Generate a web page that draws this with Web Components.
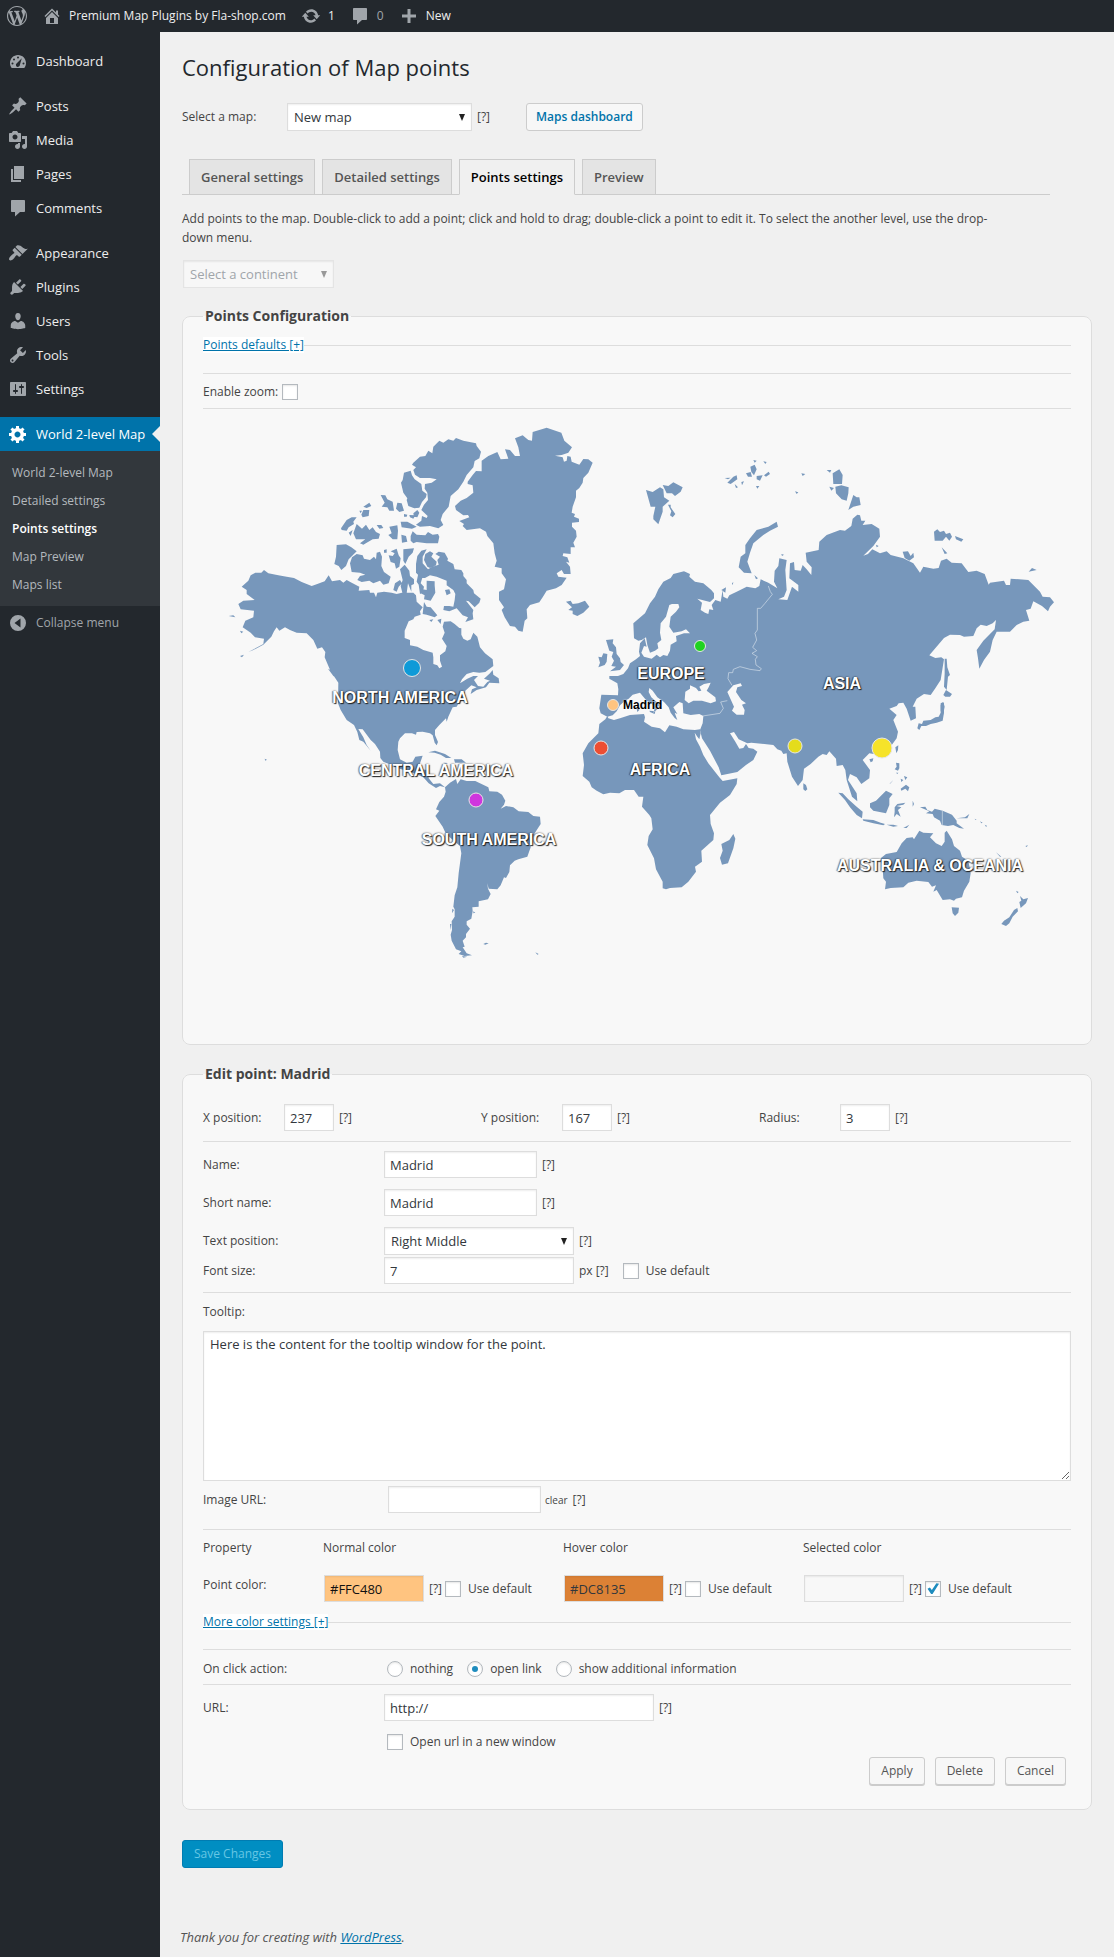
<!DOCTYPE html>
<html lang="en">
<head>
<meta charset="utf-8">
<title>Configuration of Map points</title>
<style>
html,body{margin:0;padding:0}
body{background:#f0f0f0;color:#444;font:12px/20px "Open Sans","Noto Sans",sans-serif}
</style>
</head>
<body>
<admin-shell>
  <admin-toolbar slot="toolbar"></admin-toolbar>
  <admin-menu slot="menu"></admin-menu>
  <page-head></page-head>
  <option-panel heading="Points Configuration"><map-settings></map-settings></option-panel>
  <option-panel heading="Edit point: Madrid"><point-editor></point-editor></option-panel>
  <page-foot></page-foot>
</admin-shell>
<script>
const ICONS = {
  wordpress:'M20 10c0-5.51-4.49-10-10-10C4.48 0 0 4.49 0 10c0 5.52 4.48 10 10 10 5.51 0 10-4.48 10-10zM7.78 15.37L4.37 6.22c.55-.02 1.17-.08 1.17-.08.5-.06.44-1.13-.06-1.11 0 0-1.45.11-2.37.11-.18 0-.37 0-.58-.01C4.12 2.69 6.87 1.11 10 1.11c2.33 0 4.45.87 6.05 2.34-.68-.11-1.65.39-1.65 1.58 0 .74.45 1.36.9 2.1.35.61.55 1.36.55 2.46 0 1.49-1.4 5-1.4 5l-3.03-8.37c.54-.02.82-.17.82-.17.5-.05.44-1.25-.06-1.22 0 0-1.44.12-2.38.12-.87 0-2.33-.12-2.33-.12-.5-.03-.56 1.2-.06 1.22l.92.08 1.26 3.41zM17.41 10c.24-.64.74-1.87.43-4.25.7 1.29 1.05 2.71 1.05 4.25 0 3.29-1.73 6.24-4.4 7.78.97-2.59 1.94-5.2 2.92-7.78zM6.1 18.09C3.12 16.65 1.11 13.53 1.11 10c0-1.3.23-2.48.72-3.59C3.25 10.3 4.67 14.2 6.1 18.09zm4.03-6.63l2.58 6.98c-.86.29-1.76.45-2.71.45-.79 0-1.57-.11-2.29-.33.81-2.38 1.62-4.74 2.42-7.1z',
  home:'M16 8.5l1.53 1.53-1.06 1.06L10 4.6l-6.47 6.49-1.06-1.06L10 2.5l4 4v-2h2v4zm-6-2.46l6 5.99V18H4v-5.97zM12 17v-5H8v5h4z',
  update:'M10.2 3.28c3.53 0 6.43 2.61 6.92 6h2.08l-3.5 4-3.5-4h2.32c-.45-1.97-2.21-3.45-4.32-3.45-1.45 0-2.73.71-3.54 1.78L4.95 5.66C6.23 4.2 8.11 3.28 10.2 3.28zm-.4 13.44c-3.52 0-6.43-2.61-6.92-6H.8l3.5-4c1.17 1.33 2.33 2.67 3.5 4H5.48c.45 1.97 2.21 3.45 4.32 3.45 1.45 0 2.73-.71 3.54-1.78l1.71 1.95c-1.28 1.46-3.15 2.38-5.25 2.38z',
  comment:'M4 2h12c.55 0 1 .45 1 1v10c0 .55-.45 1-1 1h-4l-5 4.500v-4.500H4c-.55 0-1-.45-1-1V3c0-.55.45-1 1-1z',
  plus:'M17 8.500v3h-5.500v5.500h-3v-5.500H3v-3h5.500V3h3v5.500H17z',
  dashboard:'M3.76 17h12.48c1.09-1.4 1.76-3.1 1.76-5 0-4.42-3.58-8-8-8s-8 3.58-8 8c0 1.9.67 3.6 1.76 5zM10 5.500a1 1 0 1 1 0 2 1 1 0 0 1 0-2zM6 7.500a1 1 0 1 1 0 2 1 1 0 0 1 0-2zM4.500 11.500a1 1 0 1 1 0 2 1 1 0 0 1 0-2zM15.500 11.500a1 1 0 1 1 0 2 1 1 0 0 1 0-2zM13.800 7.300L11.900 13.700A2 2 0 1 1 8.800 12.200z',
  pin:'M10.44 3.02l1.82-1.82 6.36 6.35-1.83 1.82c-1.05-.68-2.48-.57-3.41.36l-.75.75c-.92.93-1.04 2.35-.35 3.41l-1.83 1.82-2.41-2.41-2.8 2.79c-.42.42-3.38 2.71-3.8 2.29s1.86-3.39 2.28-3.81l2.79-2.79L4.1 9.36l1.83-1.82c1.05.69 2.48.57 3.4-.36l.75-.75c.93-.92 1.05-2.35.36-3.41z',
  media:'M13 11V4c0-.55-.45-1-1-1h-1.67L9 1H5L3.67 3H2c-.55 0-1 .45-1 1v7c0 .55.45 1 1 1h10c.55 0 1-.45 1-1zM7 4.5c1.38 0 2.5 1.12 2.5 2.5S8.38 9.5 7 9.5 4.5 8.38 4.5 7 5.62 4.5 7 4.5zM14 6h5v10.5c0 1.38-1.12 2.5-2.5 2.5S14 17.88 14 16.5s1.12-2.5 2.5-2.5c.17 0 .34.02.5.05V9h-3V6zm-4 8.05V13h2v3.5c0 1.38-1.12 2.5-2.5 2.5S7 17.88 7 16.5 8.12 14 9.5 14c.17 0 .34.02.5.05z',
  page:'M6 15V2h10v13H6zm-1 1h8v2H3V5h2v11z',
  brush:'M14.48 11.06L7.41 3.99l1.5-1.5c.5-.56 2.3-.47 3.51.32 1.21.8 1.43 1.28 2.91 2.1 1.18.64 2.45 1.26 4.45.85zm-.71.71L6.7 4.7 4.93 6.47c-.39.39-.39 1.02 0 1.41l1.06 1.06c.39.39.39 1.03 0 1.42-.6.6-1.43 1.11-2.21 1.69-.35.26-.7.53-1.01.84C1.43 14.23.4 16.08 1.4 17.07c.99 1 2.84-.03 4.18-1.36.31-.31.58-.66.85-1.02.57-.78 1.08-1.61 1.69-2.21.39-.39 1.02-.39 1.41 0l1.06 1.06c.39.39 1.02.39 1.41 0z',
  plug:'M13.11 4.36L9.87 7.6 8 5.73l3.24-3.24c.35-.34 1.05-.2 1.56.32.52.51.66 1.21.31 1.55zm-8 1.77l.91-1.12 9.01 9.01-1.19.84c-.71.71-2.63 1.16-3.82 1.16H6.14L4.9 17.26c-.59.59-1.54.59-2.12 0-.59-.58-.59-1.53 0-2.12l1.24-1.24v-3.88c0-1.13.4-3.19 1.09-3.89zm7.26 3.97l3.24-3.24c.34-.35 1.04-.21 1.55.31.52.51.66 1.21.31 1.55l-3.24 3.25z',
  user:'M10 9.25c-2.27 0-2.73-3.44-2.73-3.44C7 4.02 7.82 2 9.97 2c2.16 0 2.98 2.02 2.71 3.81 0 0-.41 3.44-2.68 3.44zm0 2.57L12.72 10c2.39 0 4.52 2.33 4.52 4.53v2.49s-3.65 1.13-7.24 1.13c-3.65 0-7.24-1.13-7.24-1.13v-2.49c0-2.25 1.94-4.48 4.47-4.48z',
  wrench:'M16.68 9.77c-1.34 1.34-3.3 1.67-4.95.99l-5.41 6.52c-.99.99-2.59.99-3.58 0s-.99-2.59 0-3.57l6.52-5.42c-.68-1.65-.35-3.61.99-4.95 1.28-1.28 3.12-1.62 4.72-1.06l-2.89 2.89 2.82 2.82 2.86-2.87c.53 1.58.18 3.39-1.08 4.65zM3.81 16.21c.4.39 1.04.39 1.43 0 .4-.4.4-1.04 0-1.43-.39-.4-1.03-.4-1.43 0-.39.39-.39 1.03 0 1.43z',
  sliders:'M18 16V4c0-.55-.45-1-1-1H3c-.55 0-1 .45-1 1v12c0 .55.45 1 1 1h14c.55 0 1-.45 1-1zM8 11h1c.55 0 1 .45 1 1s-.45 1-1 1H8v1.5c0 .28-.22.5-.5.5s-.5-.22-.5-.5V13H6c-.55 0-1-.45-1-1s.45-1 1-1h1V5.5c0-.28.22-.5.5-.5s.5.22.5.5V11zm5-2h-1c-.55 0-1-.45-1-1s.45-1 1-1h1V5.5c0-.28.22-.5.5-.5s.5.22.5.5V7h1c.55 0 1 .45 1 1s-.45 1-1 1h-1v5.5c0 .28-.22.5-.5.5s-.5-.22-.5-.5V9z',
  gear:'M18 12h-2.18c-.17.7-.44 1.35-.81 1.93l1.54 1.54-2.1 2.1-1.54-1.54c-.58.36-1.23.63-1.91.79V19H8v-2.18c-.68-.16-1.33-.43-1.91-.79l-1.54 1.54-2.12-2.12 1.54-1.54c-.36-.58-.63-1.23-.79-1.91H1V9.03h2.17c.16-.7.44-1.35.8-1.94L2.43 5.55l2.1-2.1 1.54 1.54c.58-.37 1.24-.64 1.93-.81V2h3v2.18c.68.16 1.33.43 1.91.79l1.54-1.54 2.12 2.12-1.54 1.54c.36.59.64 1.24.8 1.94H18V12zm-8.5 1.5c1.66 0 3-1.34 3-3s-1.34-3-3-3-3 1.34-3 3 1.34 3 3 3z',
  collapse:'M10 2a8 8 0 1 1 0 16 8 8 0 0 1 0-16zM12.500 5.500L6.500 10l6 4.500z'
};

const define = (name, html, setup) => customElements.define(name, class extends HTMLElement {
  constructor(){
    super();
    this.attachShadow({mode:'open'});
  }
  connectedCallback(){
    const t = document.createElement('template');
    t.innerHTML = typeof html === 'function' ? html(this) : html;
    this.shadowRoot.replaceChildren(t.content.cloneNode(true));
    if (setup) setup(this);
  }
});

define('dash-icon', el => `<style>:host{display:block;width:20px;height:20px;flex:none}svg{display:block;width:100%;height:100%;fill:currentColor}</style>
<svg viewBox="0 0 20 20" aria-hidden="true"><path fill-rule="evenodd" d="${ICONS[el.getAttribute('name')]}"/></svg>`);

define('help-tip', `<style>:host{display:inline-block;font-size:12px;line-height:20px;margin-left:5px;cursor:help;white-space:nowrap}</style><span>[?]</span>`);

const CONTROLS = `
*{box-sizing:border-box}
a{color:#0073aa}
input,select,textarea,button{font-family:inherit;margin:0}
input[type=text],select,textarea{height:27px;border:1px solid #ddd;border-radius:0;background:var(--fill,#fff);color:var(--ink,#32373c);font-size:13px;line-height:20px;padding:0 5px;box-shadow:inset 0 1px 2px rgba(0,0,0,.07);outline:0}
select{appearance:none;height:28px;padding:0 6px}
.pick{display:inline-grid;flex:none}
.pick>*{grid-area:1/1}
.pick svg{width:6px;height:7px;justify-self:end;align-self:center;margin-right:7px;fill:#222;pointer-events:none}
input[type=checkbox],input[type=radio]{appearance:none;flex:none;width:16px;height:16px;border:1px solid #b4b9be;background:#fff;box-shadow:inset 0 1px 2px rgba(0,0,0,.1);display:grid;place-content:center}
input[type=radio]{border-radius:50%}
input[type=radio]:checked::before{content:"";width:6px;height:6px;border-radius:50%;background:#1e8cbe}
input[type=checkbox]:checked::before{content:"";width:12px;height:12px;background:#1e8cbe;clip-path:polygon(4% 52%,24% 42%,40% 62%,78% 6%,100% 10%,46% 96%,34% 96%)}
.btn{display:inline-block;height:28px;line-height:26px;padding:0 11px;border:1px solid #ccc;border-radius:3px;background:#f7f7f7;color:#555;font-size:12px;box-shadow:0 1px 0 #ccc;text-decoration:none;cursor:pointer}
hr{border:0;border-top:1px solid #ddd;margin:0}
.toggle{display:flex;align-items:center;height:20px}
.toggle a{background:#fff;line-height:16px}
.toggle::after{content:"";flex:1;height:1px;background:#ddd}
`;
const ARROW = '<svg viewBox="0 0 6 7" aria-hidden="true"><path d="M0 0h6L3 7z"/></svg>';

define('admin-shell', `<style>
:host{display:flex;flex-direction:column;min-height:100vh}
.cols{display:flex;flex:1}
nav{width:160px;flex:none;background:#23282d}
main{flex:1;min-width:0;padding:20px 22px 10px;display:flex;flex-direction:column}
</style>
<slot name="toolbar"></slot>
<div class="cols"><nav><slot name="menu"></slot></nav><main><slot></slot></main></div>`);

define('admin-toolbar', `<style>
:host{display:block;background:#23282d;color:#eee;height:32px}
ul{display:flex;align-items:center;height:32px;margin:0;padding:0 7px;list-style:none;gap:15px}
a{display:flex;align-items:center;gap:7px;color:inherit;text-decoration:none;line-height:32px}
dash-icon{color:#a0a5aa}
.dim{color:#a0a5aa}
</style>
<ul>
<li><a href="#" aria-label="About WordPress"><dash-icon name="wordpress"></dash-icon></a></li>
<li><a href="#"><dash-icon name="home"></dash-icon>Premium Map Plugins by Fla-shop.com</a></li>
<li><a href="#"><dash-icon name="update"></dash-icon>1</a></li>
<li><a href="#"><dash-icon name="comment"></dash-icon><span class="dim">0</span></a></li>
<li><a href="#"><dash-icon name="plus"></dash-icon>New</a></li>
</ul>`);

define('menu-entry', `<style>
:host{display:block;font-size:13px}
a{display:flex;align-items:center;gap:8px;height:34px;padding-left:8px;color:#eee;text-decoration:none;white-space:nowrap}
dash-icon{color:#a0a5aa}
:host([current]) a{position:relative;background:#0073aa;color:#fff}
:host([current]) dash-icon{color:#fff}
:host([current]) a::after{content:"";position:absolute;right:0;top:9px;border:8px solid transparent;border-left:0;border-right-color:#f0f0f0}
:host([muted]) a{color:#a0a5aa;font-size:12px}
</style><a href="#"><dash-icon></dash-icon><slot></slot></a>`, el => {
  const i = el.shadowRoot.querySelector('dash-icon');
  const n = document.createElement('dash-icon');
  n.setAttribute('name', el.getAttribute('icon'));
  i.replaceWith(n);
});

define('admin-menu', `<style>
:host{display:block;padding-top:12px}
.group{margin-bottom:11px}
ul{margin:0;padding:8px 0 7px;list-style:none;background:#32373c}
ul a{display:block;padding-left:12px;line-height:28px;color:#b4b9be;text-decoration:none}
ul a[aria-current]{color:#fff;font-weight:600}
</style>
<div class="group"><menu-entry icon="dashboard">Dashboard</menu-entry></div>
<div class="group"><menu-entry icon="pin">Posts</menu-entry><menu-entry icon="media">Media</menu-entry><menu-entry icon="page">Pages</menu-entry><menu-entry icon="comment">Comments</menu-entry></div>
<div class="group"><menu-entry icon="brush">Appearance</menu-entry><menu-entry icon="plug">Plugins</menu-entry><menu-entry icon="user">Users</menu-entry><menu-entry icon="wrench">Tools</menu-entry><menu-entry icon="sliders">Settings</menu-entry></div>
<menu-entry icon="gear" current>World 2-level Map</menu-entry>
<ul><li><a href="#">World 2-level Map</a></li><li><a href="#">Detailed settings</a></li><li><a href="#" aria-current="page">Points settings</a></li><li><a href="#">Map Preview</a></li><li><a href="#">Maps list</a></li></ul>
<menu-entry icon="collapse" muted>Collapse menu</menu-entry>`);

define('page-head', `<style>${CONTROLS}
:host{display:block;margin-bottom:18px}
h1{margin:0 0 21px;font-size:22px;line-height:30px;font-weight:400;color:#23282d}
.map{display:flex;align-items:center;margin-bottom:28px}
.map label{width:105px}
.map select{width:185px}
.map .btn{margin-left:36px;padding:0 9px;font-weight:600;color:#0073aa;box-shadow:none}
nav{display:flex;gap:7px;padding-left:7px;margin-right:42px;border-bottom:1px solid #ccc}
nav a{height:36px;line-height:34px;padding:0 11px;border:1px solid #ccc;background:#e4e4e4;color:#555;font-size:13px;font-weight:600;text-decoration:none;margin-bottom:-1px}
nav a[aria-current]{background:#f0f0f0;color:#000;border-bottom-color:#f0f0f0}
p{margin:14px 90px 13px 0;line-height:19px}
.level{--fill:#f7f7f7;--ink:#a0a5aa;padding-left:1px}
.level select{width:151px;border-color:#e4e4e4;opacity:1}
.level svg{fill:#999}
</style>
<h1>Configuration of Map points</h1>
<div class="map"><label for="map">Select a map:</label><span class="pick"><select id="map"><option>New map</option></select>${ARROW}</span><help-tip></help-tip><a class="btn" href="#">Maps dashboard</a></div>
<nav><a href="#">General settings</a><a href="#">Detailed settings</a><a href="#" aria-current="page">Points settings</a><a href="#">Preview</a></nav>
<p>Add points to the map. Double-click to add a point; click and hold to drag; double-click a point to edit it. To select the another level, use the drop-down menu.</p>
<span class="pick level"><select disabled aria-label="Continent"><option>Select a continent</option></select>${ARROW}</span>`);

define('option-panel', el => `<style>
:host{display:block;margin-bottom:19px}
fieldset{min-width:0;margin:0;padding:0 20px;border:1px solid #ddd;border-radius:8px;background:#f8f8f8}
legend{padding:0 2px;font-size:14px;line-height:20px;font-weight:700;color:#444}
</style><fieldset><legend>${el.getAttribute('heading')}</legend><slot></slot></fieldset>`);

define('map-settings', `<style>${CONTROLS}
:host{display:block;padding-top:9px}
.toggle{margin-bottom:18px}
.zoom{display:flex;align-items:center;gap:4px;height:20px;margin:8px 0 6px}
</style>
<div class="toggle"><a href="#">Points defaults [+]</a></div><hr>
<div class="zoom"><label for="z">Enable zoom:</label><input type="checkbox" id="z"></div><hr>
<world-map></world-map>`);

/* Coastlines are drawn at three units to the pixel, in four sheets. */
const NW = `
M845,152 865,138 892,126 902,148 925,146 915,118 930,120 945,138 960,138 955,112 945,85 968,76 985,90 996,92 998,66 1040,53 1084,68 1093,92 1116,112 1105,128 1085,135 1065,137 1088,142 1092,155 1100,152 1102,138 1112,140 1115,155 1138,164 1150,147 1165,148 1178,158 1165,188 1150,204 1148,218 1138,234 1128,242 1128,262 1118,290 1115,308 1125,312 1122,320 1137,326 1137,336 1116,338 1116,350 1128,362 1130,380 1120,398 1125,412 1112,412 1112,432 1090,430 1088,438 1102,442 1108,458 1098,455 1110,470 1112,492 1092,492 1085,480 1070,490 1075,500 1100,503 1085,525 1068,535 1040,542 1028,562 1018,577 990,585 980,598 982,625 974,632 968,665 955,662 945,650 930,648 914,622 905,600 912,592 897,570 897,545 912,538 918,508 905,490 905,475 884,470 890,452 884,430 880,400 862,378 858,365 840,355 800,360 788,348 792,342 778,333 808,322 804,315 790,316 768,300 765,288 782,272 800,264 820,248 818,226 803,222 803,215 818,195 828,183 845,184Z
M640,158 660,140 676,138 685,122 697,130 700,110 718,92 730,98 745,88 760,92 768,84 790,92 828,100 830,108 843,125 838,145 824,153 820,172 800,195 790,215 775,238 752,258 746,290 728,312 722,330 730,345 715,355 690,348 660,350 648,344 664,332 666,318 680,324 683,318 664,300 672,284 684,270 682,248 674,236 675,222 695,218 710,208 690,204 660,204 645,194 640,180 648,172 636,164Z
M632,182 612,188 608,210 603,218 610,248 622,265 620,270 625,288 643,295 658,293 666,276 678,262 680,252 667,242 664,222 644,208 636,196Z
M542,255 556,256 562,268 578,275 582,302 568,302 562,292 545,290 554,278Z
M592,278 605,280 612,302 598,306 588,296Z M490,290 508,278 514,288 500,294Z M478,302 486,302 482,310Z M490,300 508,300 506,318 488,322 484,314Z
M423,355 440,330 455,322 470,322 460,335 462,342 446,352 440,362 425,360Z
M446,368 458,360 452,378Z M460,370 470,342 486,356 498,344 508,360 518,352 528,366 540,372 536,386 518,388 490,404 480,400 496,388 468,388Z
M530,345 544,345 550,354 538,356Z M565,375 575,370 568,350 592,346 594,362 592,388 578,388Z
M602,335 622,335 650,350 636,356 605,352Z M604,374 618,378 622,395 606,398Z M612,312 622,314 620,320 612,320Z M628,315 646,316 640,326 630,322Z
M640,310 652,300 658,308 652,322 642,320Z
M632,378 638,364 650,374 676,376 684,366 698,374 714,372 718,380 714,400 680,400 650,396 640,400 632,392Z
M410,405 438,403 454,412 470,424 456,438 446,448 438,468 424,480 416,468 403,462 408,440Z
M450,460 456,442 470,432 488,436 492,446 510,450 522,440 528,448 530,428 540,425 546,440 544,468 552,486 572,500 566,520 550,524 540,512 520,520 508,512 485,516 472,510 480,498 496,494 480,488 455,486Z
M566,436 578,438 584,430 572,424 590,416 596,436 602,445 598,470 588,476 584,460 572,456Z
M552,420 560,418 560,428 552,428Z M610,418 642,415 638,428 626,440 616,462 610,452Z
M600,478 614,464 628,482 630,498 642,508 642,522 634,526 634,545 624,520 620,550 608,552 602,528 608,510Z
M585,520 600,510 606,520 596,530 590,545 580,540Z
M664,422 680,418 668,440 668,460 684,478 698,470 716,464 712,450 720,440 706,432 716,425 734,428 744,446 742,452 760,462 764,478 784,480 790,490 790,498 800,510 800,520 820,540 822,550 842,566 838,578 824,592 806,574 798,572 820,600 818,610 820,628 796,636 804,622 788,616 770,595 748,604 730,600 732,588 748,588 760,590 764,570 766,552 760,540 740,526 740,512 710,500 690,496 675,504 660,500 648,488 648,462 652,438Z
M682,470 672,450 676,432 690,424 700,430 694,440 710,455 708,466 690,474Z
M680,512 704,514 704,526 706,548 692,572 672,568 674,556 662,550 668,538 680,540Z
M735,540 748,538 752,550 740,556Z M672,576 680,590 692,592 712,616 704,622 680,614 668,612Z M655,490 668,500 662,520 672,530 668,548 660,552 656,524 650,515Z M712,630 724,626 722,642Z M688,630 700,628 694,636Z
M125,530 145,512 152,496 166,488 184,488 192,480 205,490 235,496 260,500 282,504 305,516 335,528 352,522 374,514 386,496 396,514 420,510 430,518 440,510 455,518 478,530 476,542 508,540 510,548 522,548 528,562 532,548 552,545 575,548 590,552 606,548 640,548 648,556 650,575 668,592 660,604 662,614 644,620 640,628 626,634 614,662 614,684 630,690 630,706 652,710 670,720 698,728 700,742 700,762 712,766 718,775 726,770 720,752 720,736 736,724 740,708 726,686 734,668 728,650 732,635 752,634 764,642 778,654 784,655 784,674 790,686 802,692 812,688 820,668 832,680 840,712 855,730 878,748 880,768 856,786 838,788 820,786 800,792 786,808 780,820 802,806 820,798 834,798 822,810 834,828 850,830 862,816 870,812 852,806 870,790 878,780 880,794 896,805 898,820 868,818 858,832 830,840 812,852 816,838 830,832 814,826 796,842 792,870 780,872 770,890 758,892 745,920 740,935 738,925 718,945 705,960 705,975 714,996 710,1006 704,998 698,976 690,970 668,965 650,966 648,974 636,970 615,970 600,985 595,995 593,1020 600,1048 620,1058 638,1055 646,1040 668,1037 660,1060 655,1078 685,1080 686,1105 700,1122 720,1120 735,1132 720,1128 708,1134 686,1120 670,1102 648,1092 600,1076 550,1055 541,1044 540,1025 525,1002 512,990 488,958 475,957 490,982 500,1005 512,1022 490,995 478,990 472,966 462,945 440,930 422,900 414,880 415,818 396,790 388,775 374,742 376,726 366,712 352,716 340,690 320,670 290,668 270,660 255,652 238,662 230,652 222,664 214,680 202,692 190,704 160,720 145,726 190,702 192,686 165,682 152,668 128,652 136,632 160,622 162,602 122,598 115,582 130,572 164,570 140,552 140,540Z
M384,776 396,782 422,806 424,812 400,798Z M120,662 130,665 124,670Z M86,618 100,616 106,622Z M120,738 132,734 126,742Z
M1098,575 1112,572 1118,582 1135,580 1155,572 1168,590 1150,608 1132,618 1118,612 1118,602 1105,600 1116,592Z
M1195,740 1205,742 1210,730 1222,732 1220,755 1214,765 1195,772 1200,758Z
M1218,690 1240,688 1238,700 1248,712 1250,732 1260,745 1262,756 1272,765 1260,780 1230,784 1248,770 1234,768 1242,752 1235,740 1240,726 1228,722Z`;
const SW = `
M685,157 705,152 735,162 754,174 738,174 722,164 704,158Z M762,178 785,178 798,188 765,188Z M730,188 744,189 738,192Z M194,176 201,179 196,182Z
M735,262 750,248 768,237 772,252 782,238 800,243 826,243 840,250 865,262 868,274 892,275 906,284 916,302 912,314 902,326 918,318 940,322 956,334 985,336 1000,348 1020,350 1022,372 1004,400 994,422 992,442 982,470 955,478 944,482 930,496 928,516 918,534 912,532 902,556 892,568 866,566 862,550 864,566 872,582 864,598 836,604 836,620 817,622 818,634 814,656 800,664 800,674 810,686 798,702 798,712 788,722 794,740 788,742 800,760 816,766 794,768 776,762 784,754 768,748 755,722 752,704 756,690 755,664 764,650 764,628 760,620 764,586 772,562 776,520 780,490 784,460 780,438 765,425 738,402 728,380 706,348 718,332 708,328 718,306 732,290 737,275Z
M750,672 754,672 752,690Z M757,626 762,630 756,640Z M850,732 858,728 866,730 856,734Z M786,768 802,770 790,773Z M1006,757 1016,762 1012,764Z M820,634 826,638 820,640Z`;
const NE = `
M-20,640 -18,685 -5,692 5,690 18,682 22,705 30,728 45,722 55,715 52,700 64,690 60,668 62,640 78,620 88,585 96,582 115,582 118,592 108,605 92,620 88,650 100,668 125,664 138,658 150,670 132,670 108,678 110,694 92,704 90,722 82,738 70,735 60,742 50,734 35,746 12,740 4,728 12,708 20,710 14,685 0,700 -3,725 0,738 -12,748 -30,760 -36,775 -50,792 -66,798 -92,798 -92,806 -68,820 -65,838 -66,856 -116,854 -118,868 -122,895 -118,910 -98,920 -82,916 -70,904 -60,886 -45,872 -34,866 -22,854 0,848 8,858 20,872 36,882 44,896 40,908 52,898 46,884 60,892 62,884 50,876 34,862 26,846 28,834 38,842 52,862 72,876 86,892 92,908 104,924 112,930 104,908 112,912 100,892 118,876 128,880 130,910 152,915 178,912 190,918 188,940 180,960 186,985 210,1022 236,1072 244,1096 292,1086 318,1065 340,1050 352,1025 340,1016 326,1014 318,1002 310,1014 298,1016 286,995 270,970 282,966 296,988 322,1000 334,998 400,1005 412,1018 424,1022 430,1032 440,1030 442,1055 456,1100 474,1128 488,1110 492,1076 512,1062 535,1040 548,1032 560,1035 568,1024 588,1046 590,1068 608,1065 616,1080 620,1110 636,1160 652,1174 650,1150 634,1125 624,1110 630,1092 650,1102 664,1122 688,1105 690,1080 668,1050 688,1030 720,1035 746,1018 770,985 774,965 760,930 770,915 748,896 770,888 776,880 790,878 800,896 812,932 828,925 826,890 818,890 830,866 852,852 872,855 886,835 902,810 912,748 904,742 886,744 868,736 912,684 930,674 960,675 972,680 1000,678 1010,655 1022,644 1040,648 1058,640 1068,630 1064,658 1030,692 1010,720 1014,745 1018,776 1032,750 1050,725 1058,690 1070,665 1110,665 1130,645 1150,635 1168,632 1158,600 1172,596 1180,574 1206,588 1224,604 1230,590 1242,577 1230,562 1208,560 1200,545 1165,510 1112,506 1110,525 1098,525 1092,512 1050,518 1046,524 1034,492 1010,482 985,486 965,460 935,458 920,446 903,452 896,474 880,476 850,470 840,488 820,460 790,445 752,435 740,424 720,430 697,418 684,432 670,437 700,408 720,380 718,356 695,342 668,345 676,332 664,332 660,316 652,314 638,326 634,348 615,362 600,360 560,375 538,395 536,420 497,428 500,455 515,472 514,495 500,478 488,465 482,482 464,480 462,456 450,460 448,505 475,525 475,545 456,530 442,570 415,568 432,560 440,540 436,480 440,450 418,445 415,468 404,482 402,515 412,535 385,518 362,508 358,528 346,535 320,530 290,545 268,556 262,566 250,560 248,540 242,575 226,570 215,585 220,600 208,598 205,612 195,608 182,600 186,578 172,566 210,576 222,565 222,550 214,540 190,520 165,515 148,500 150,492 132,484 100,492 92,504 70,515 55,538 45,560 30,580 15,610Z
M410,335 414,350 390,362 370,375 340,400 330,428 322,455 335,490 312,488 296,472 302,440 316,430 316,405 330,385 350,360 385,350Z M343,495 354,505 348,508Z
M18,240 38,246 60,232 70,238 72,262 88,272 68,290 68,305 55,343 40,328 40,318 46,290 32,290Z M68,225 85,228 100,217 128,232 122,245 105,258 96,250 80,250Z M84,284 92,284 92,292 106,312 98,322 90,316 94,304Z
M578,190 598,178 608,195 606,222 580,222Z M586,230 604,226 626,232 625,250 620,272 605,268 588,250Z M640,255 650,262 658,262 662,285 640,290 625,300Z M560,180 574,180 570,188Z M568,230 582,234 574,242Z M484,190 496,192 488,198Z M465,244 475,247 470,252Z
M331,170 344,164 350,178 342,196 334,186Z M318,190 332,186 336,200 324,200Z M350,198 368,196 360,212 350,208Z M372,196 386,185 390,192 378,200Z M254,204 272,203 264,208Z M262,218 280,200 290,196 292,208 272,222Z M340,150 350,152 344,158Z M370,154 380,156 376,162Z M348,228 358,228 352,236Z M304,216 312,214 306,226Z M284,222 294,232 288,234Z
M882,365 892,358 900,366 912,362 918,372 930,368 936,380 928,392 918,380 908,392 884,392Z M945,378 970,388 964,395 948,388Z M905,412 922,430 914,432Z M1166,485 1176,474 1190,480Z M788,425 804,424 812,438 820,428 822,442 808,452 794,444Z M708,404 716,408 710,412Z M276,520 280,516 278,526Z M244,540 258,532 256,548Z M424,432 432,434 426,438Z
M914,746 920,746 922,772 930,795 924,800 920,840 912,830 914,790Z M910,855 918,840 936,852 930,860 916,860Z M902,880 910,876 914,890 908,920 902,902Z
M-4,888 -2,900 -8,906 -10,896Z M28,902 46,904 44,912 30,906Z`;
const SE = `
M832,85 836,70 846,72 850,62 872,60 886,52 896,50 902,38 902,15 912,8 912,38 908,62 890,68 872,72 858,78 844,78 838,90Z
M-98,48 -95,55 -78,60 -60,55 -30,45 12,42 15,52 12,65 35,80 60,85 75,97 88,76 110,80 130,88 165,90 180,88 182,100 178,118 172,110 164,98 168,118 180,140 190,165 205,190 225,215 238,232 248,243 292,235 290,252 270,285 240,308 210,345 212,372 222,400 220,420 184,452 186,485 165,500 168,515 145,545 125,562 90,564 78,568 68,565 68,545 48,508 42,475 22,435 26,408 38,388 34,355 28,345 6,320 10,290 -4,290 -18,270 -45,270 -62,280 -90,278 -110,283 -130,272 -145,262 -152,245 -172,228 -168,195 -172,160 -155,130 -125,100 -122,72 -104,58Z
M280,402 286,416 280,445 264,490 246,494 240,474 248,452 244,432 268,420Z
M490,250 498,255 502,268 496,273 490,268Z M595,278 608,280 625,298 650,320 668,335 666,355 650,345 630,322 615,300Z M668,358 700,360 722,368 735,372 730,376 700,370 670,362Z M740,374 760,374 774,378 760,380Z M790,384 808,374 800,384Z M690,310 708,302 738,272 758,282 748,295 748,315 738,340 700,332 690,322Z
M764,322 772,312 796,308 790,314 770,318 784,322 774,330 782,350 770,342 762,352 764,335Z M818,302 822,312 818,320Z M768,188 778,190 778,205 774,212 764,208 770,200Z M768,218 775,218 772,222Z M782,236 790,240 784,246Z M792,228 802,232 796,240Z M748,252 760,240 752,250Z M782,266 798,254 808,262 804,274 796,266 784,272Z
M840,322 856,320 862,330 876,335 884,326 908,332 936,344 950,362 950,370 972,386 958,384 940,375 924,378 905,375 900,362 882,352 878,342 858,340 868,334Z M950,355 975,352 988,342 982,355Z M766,142 775,136 774,150 769,160Z M688,178 700,175 698,184 692,187Z
M722,475 738,462 770,456 785,430 800,414 818,412 822,418 838,392 850,398 880,400 870,412 888,430 905,438 914,425 914,398 920,392 936,418 942,438 960,452 966,470 985,482 992,520 988,545 972,572 966,592 948,596 942,602 930,598 908,600 890,570 880,575 888,556 876,560 865,546 830,542 805,548 790,562 752,564 735,568 738,545 730,535 728,505Z
M935,622 957,623 955,638 945,648 938,640Z M1140,588 1150,598 1164,594 1158,610 1142,624 1138,606 1144,602Z M1122,630 1132,624 1134,634 1118,650 1108,670 1098,678 1084,672 1092,662 1108,652Z M1128,572 1136,576 1132,580Z M1068,457 1084,470 1080,470Z M1156,438 1164,436 1160,441Z M1004,356 1010,360 1006,360Z M1020,364 1028,368 1024,370Z M1034,374 1042,378 1038,380Z`;
const poly = s => s.replace(/M(\S+) /g,'M$1L');
const SEAS = `M134,870 136,845 150,836 150,826 168,834 176,844 184,842 178,830 192,822 212,818 206,832 200,842 226,862 228,874 212,880 186,872 160,872 146,880Z
M262,846 280,826 302,820 306,828 292,832 288,846 304,870 318,880 306,884 314,900 312,914 290,914 276,902 282,890Z`;

define('world-map', `<style>
:host{display:block}
svg{display:block;width:100%;height:auto}
.land{fill:#7797bb}
.sea{fill:#f8f8f8}
.edge{fill:none;stroke:#d5dfea;stroke-width:2}
.name{font:bold 16px "Liberation Sans",Arial,sans-serif;fill:#fff;text-anchor:middle;text-shadow:1px 1px 1px #222,-1px 0 1px rgba(0,0,0,.4),0 0 2px rgba(0,0,0,.6)}
.town{font:bold 12px "Liberation Sans",Arial,sans-serif;fill:#000;text-shadow:0 0 2px #fff}
circle{stroke:#e6e6e6;stroke-width:1}
</style>
<svg viewBox="203 409 868 635" role="img" aria-label="World map">
<g transform="translate(200 410) scale(.33333)"><path class="land" d="${poly(NW)}"/></g>
<g transform="translate(200 700) scale(.33333)"><path class="land" d="${poly(SW)}"/></g>
<g transform="translate(640 410) scale(.33333)"><path class="land" d="${poly(NE)}"/><path class="sea" d="${poly(SEAS)}"/>
<path class="edge" d="M385,528L391,545 397,553 375,580 362,595 352,595 352,660 345,670 350,690 338,712 350,722 336,730 352,740 346,748 348,765 364,776 360,782 330,778 300,770 280,778 278,788 266,788 264,806 276,826M188,918L240,910 250,895 242,876 262,872"/></g>
<g transform="translate(640 700) scale(.33333)"><path class="land" d="${poly(SE)}"/><path class="edge" d="M907,332V375"/></g>
<text class="name" x="400" y="703">NORTH AMERICA</text>
<text class="name" x="436" y="776">CENTRAL AMERICA</text>
<text class="name" x="489" y="845">SOUTH AMERICA</text>
<text class="name" x="671" y="679">EUROPE</text>
<text class="name" x="842" y="689">ASIA</text>
<text class="name" x="660" y="775">AFRICA</text>
<text class="name" x="930" y="871">AUSTRALIA &amp; OCEANIA</text>
<text class="town" x="623" y="709">Madrid</text>
<circle cx="412" cy="668" r="8.500" fill="#0e9ad8"/><circle cx="700" cy="646" r="5.500" fill="#1fd320"/><circle cx="613" cy="705" r="5.500" fill="#ffc480"/><circle cx="601" cy="748" r="7" fill="#ed4e33"/><circle cx="476" cy="800" r="7" fill="#cf36de"/><circle cx="795" cy="746" r="7" fill="#e4dc1c"/><circle cx="882" cy="748" r="10" fill="#f6e32a"/>
</svg>`);

define('point-editor', `<style>${CONTROLS}
:host{display:block;padding:20px 0 24px}
form{margin:0}
.row{display:flex;align-items:center}
.row>label:first-child,.row>.lead{width:181px;flex:none}
.geo{display:grid;grid-template-columns:278px 278px 1fr;margin-bottom:10px}
.geo .row label:first-child{width:81px}
.geo input{width:50px}
.names{display:grid;gap:11px;margin:9px 0 2px}
.mid{width:153px}
.wide{width:190px}
.opt{display:flex;align-items:center;gap:7px}
.size{margin-bottom:8px}
.size span{margin-left:5px}
.size help-tip{margin-left:3px}
.size .opt{margin-left:14px}
.tip{margin:9px 0}
textarea{display:block;width:100%;height:150px;padding:2px 6px;resize:vertical;margin-bottom:5px}
.image{margin-bottom:16px}
.image input{margin-left:4px}
.clear{font-size:10px;color:#444;margin-left:4px;text-decoration:none}
.colors{display:grid;grid-template-columns:120px 240px 240px 1fr;row-gap:17px;margin:8px 0 10px}
.colors .row{padding-left:1px}
.colors input[type=text]{width:100px}
.colors .row .opt{margin-left:3px}
.n{--fill:#ffc480;--ink:#111}
.h{--fill:#dc8135}
.s{--fill:#f8f8f8}
.toggle{margin-bottom:17px}
.click{margin:9px 0 5px}
.click .row{gap:14px}
.click .row .opt{width:auto}
.url{margin:9px 0 11px}
.url input{width:270px}
.sub{padding-left:3px}
.actions{display:flex;justify-content:flex-end;gap:10px;margin-top:5px;padding-right:5px}
</style>
<form onsubmit="return false">
<div class="geo">
<div class="row"><label for="x">X position:</label><input type="text" id="x" value="237"><help-tip></help-tip></div>
<div class="row"><label for="y">Y position:</label><input type="text" id="y" value="167"><help-tip></help-tip></div>
<div class="row"><label for="r">Radius:</label><input type="text" id="r" value="3"><help-tip></help-tip></div>
</div><hr>
<div class="names">
<div class="row"><label for="name">Name:</label><input class="mid" type="text" id="name" value="Madrid"><help-tip></help-tip></div>
<div class="row"><label for="short">Short name:</label><input class="mid" type="text" id="short" value="Madrid"><help-tip></help-tip></div>
<div class="row"><label for="pos">Text position:</label><span class="pick"><select class="wide" id="pos"><option>Right Middle</option></select>${ARROW}</span><help-tip></help-tip></div>
</div>
<div class="row size"><label for="fs">Font size:</label><input class="wide" type="text" id="fs" value="7"><span>px</span><help-tip></help-tip><label class="opt"><input type="checkbox">Use default</label></div><hr>
<div class="tip"><label for="tip">Tooltip:</label></div>
<textarea id="tip">Here is the content for the tooltip window for the point.</textarea>
<div class="row image"><label for="img">Image URL:</label><input class="mid" type="text" id="img"><a class="clear" href="#">clear</a><help-tip></help-tip></div><hr>
<div class="colors">
<span>Property</span><span>Normal color</span><span>Hover color</span><span>Selected color</span>
<span>Point color:</span>
<div class="row"><input class="n" type="text" aria-label="Normal color" value="#FFC480"><help-tip></help-tip><label class="opt"><input type="checkbox">Use default</label></div>
<div class="row"><input class="h" type="text" aria-label="Hover color" value="#DC8135"><help-tip></help-tip><label class="opt"><input type="checkbox">Use default</label></div>
<div class="row"><input class="s" type="text" aria-label="Selected color" disabled><help-tip></help-tip><label class="opt"><input type="checkbox" checked>Use default</label></div>
</div>
<div class="toggle"><a href="#">More color settings [+]</a></div><hr>
<div class="row click"><span class="lead">On click action:</span><div class="row sub"><label class="opt"><input type="radio" name="act">nothing</label><label class="opt"><input type="radio" name="act" checked>open link</label><label class="opt"><input type="radio" name="act">show additional information</label></div></div><hr>
<div class="row url"><label for="url">URL:</label><input type="text" id="url" value="http://"><help-tip></help-tip></div>
<div class="row"><span class="lead"></span><label class="opt sub"><input type="checkbox">Open url in a new window</label></div>
<div class="actions"><button class="btn" type="button">Apply</button><button class="btn" type="button">Delete</button><button class="btn" type="button">Cancel</button></div>
</form>`);

define('page-foot', `<style>${CONTROLS}
:host{display:flex;flex-direction:column;align-items:flex-start;flex:1;padding-top:11px}
.save{background:#008ec2;border-color:#007cb2;color:#66c6e4;box-shadow:none}
p{margin:auto 0 0 -2px;padding-top:58px;font-size:13px;font-style:italic;color:#555}
</style>
<button class="btn save" type="button" disabled>Save Changes</button>
<p>Thank you for creating with <a href="#">WordPress</a>.</p>`);
</script>
</body>
</html>
